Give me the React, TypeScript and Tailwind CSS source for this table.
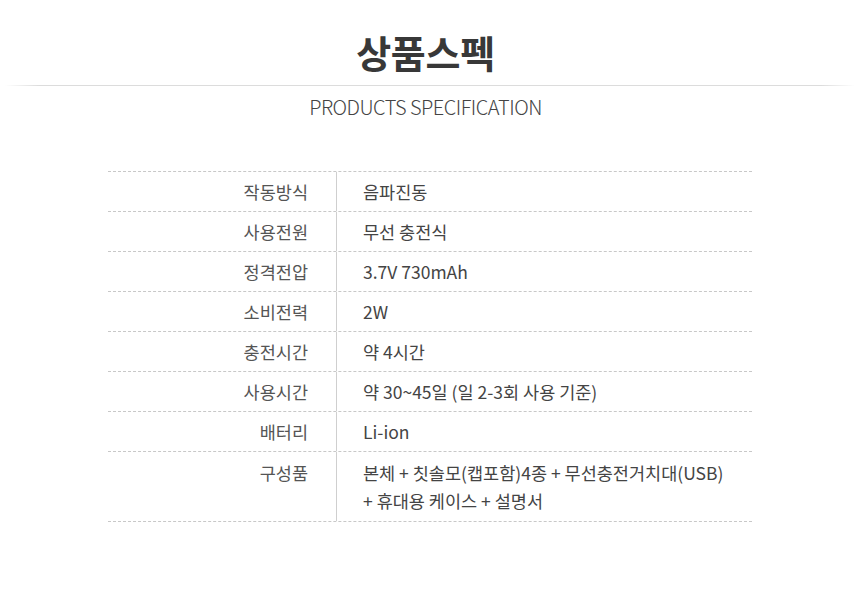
const specs: { label: string; value: string[] }[] = [
  { label: "작동방식", value: ["음파진동"] },
  { label: "사용전원", value: ["무선 충전식"] },
  { label: "정격전압", value: ["3.7V 730mAh"] },
  { label: "소비전력", value: ["2W"] },
  { label: "충전시간", value: ["약 4시간"] },
  { label: "사용시간", value: ["약 30~45일 (일 2-3회 사용 기준)"] },
  { label: "배터리", value: ["Li-ion"] },
  {
    label: "구성품",
    value: ["본체 + 칫솔모(캡포함)4종 + 무선충전거치대(USB)", "+ 휴대용 케이스 + 설명서"],
  },
];

export default function App() {
  return (
    <div
      className="w-[860px] h-[592px] bg-white text-[#444]"
      style={{ fontFamily: '"Noto Sans CJK KR", "Noto Sans", sans-serif' }}
    >
      {/* Heading */}
      <div className="pt-[26px] pr-[9px] flex flex-col items-center">
        <h1 className="text-[38px] font-bold leading-[52px] text-[#383838] tracking-[-0.3px]">상품스펙</h1>
      </div>
      <div className="mx-[5px] mt-[7px] h-[1px] bg-[linear-gradient(to_right,transparent,#dcdcdc_4%,#dcdcdc_96%,transparent)]" />
      <p className="mt-[7px] pr-[9px] text-center text-[20px] font-light leading-[28px] text-[#444] tracking-[-0.5px]">
        PRODUCTS SPECIFICATION
      </p>

      {/* Spec table */}
      <div className="mx-[108px] mt-[50px] border-t border-dashed border-[#c8c8c8]">
        {specs.map((s) => {
          const multi = s.value.length > 1;
          const pad = multi ? "pt-[7px] pb-[6px]" : "pt-[6px] pb-[5px]";
          return (
            <div key={s.label} className="flex border-b border-dashed border-[#c8c8c8]">
              <div className={`w-[228px] shrink-0 pr-[28px] ${pad} text-right text-[17.5px] leading-[28px] text-[#555]`}>
                {s.label}
              </div>
              <div className="w-[1px] bg-[#cfcfcf]" />
              <div className={`flex-1 pl-[26px] ${pad} text-[17.5px] leading-[28px] text-[#444]`}>
                {s.value.map((v) => (
                  <div key={v}>{v}</div>
                ))}
              </div>
            </div>
          );
        })}
      </div>
    </div>
  );
}
